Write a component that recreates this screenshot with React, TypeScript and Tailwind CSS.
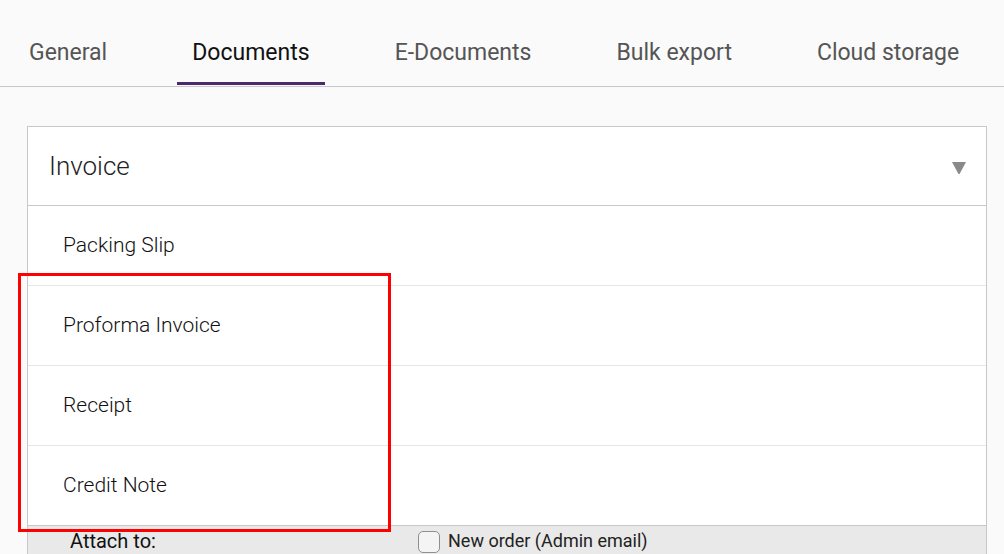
// Settings screen: document tabs with the Documents list expanded.
const tabs = ['General', 'Documents', 'E-Documents', 'Bulk export', 'Cloud storage'];
const documents = ['Packing Slip', 'Proforma Invoice', 'Receipt', 'Credit Note'];

export default function App() {
  return (
    <div className="relative h-[554px] w-[1004px] overflow-hidden bg-[#fafafa] font-['Roboto',sans-serif]">
      {/* tab bar */}
      <nav className="flex h-[87px] items-end gap-[55px] border-b border-[#c8c8c8] pb-px pl-[14px]">
        {tabs.map((t) => {
          const active = t === 'Documents';
          return (
            <div
              key={t}
              className={
                active
                  ? 'flex h-[71px] items-start border-b-[3px] border-[#4b2a6b] px-[15px] pt-[25px] text-[23px] leading-[27px] text-[#111]'
                  : 'flex h-[71px] items-start px-[15px] pt-[25px] text-[23px] leading-[27px] text-[#555]'
              }
            >
              {t}
            </div>
          );
        })}
      </nav>

      {/* documents panel */}
      <section className="ml-[27px] mt-[39px] w-[960px] border-x border-t border-[#c8c8c8] bg-white">
        <header className="flex h-[79px] items-center justify-between border-b border-[#c8c8c8] pl-[21px] pr-[20px]">
          <span className="text-[26px] font-light text-[#222]">Invoice</span>
          <svg width="14" height="14" viewBox="0 0 14 14" className="mt-[2px]">
            <polygon points="0,2 14,2 7,15" fill="#8a8a8a" />
          </svg>
        </header>
        {documents.map((d, i) => (
          <div
            key={d}
            className={
              i < documents.length - 1
                ? 'flex h-[80px] items-center border-b border-[#e6e6e6] pl-[35px] text-[21px] font-light text-[#111]'
                : 'flex h-[79px] items-center pl-[35px] text-[21px] font-light text-[#111]'
            }
          >
            {d}
          </div>
        ))}
        <div className="flex h-[40px] items-start border-t border-[#c8c8c8] bg-[#e9e9e9]">
          <span className="w-[390px] pl-[42px] text-[20px] text-[#111]">Attach to:</span>
          <span className="mt-[5px] h-[22px] w-[22px] shrink-0 rounded-[5px] border border-[#8f8f8f] bg-[#f4f4f4]" />
          <span className="ml-[8px] pt-[1px] text-[18px] text-[#222]">New order (Admin email)</span>
        </div>
      </section>

      {/* highlight annotation */}
      <div className="pointer-events-none absolute left-[18px] top-[273px] h-[259px] w-[373px] border-[3px] border-[#ff0000]" />
    </div>
  );
}
